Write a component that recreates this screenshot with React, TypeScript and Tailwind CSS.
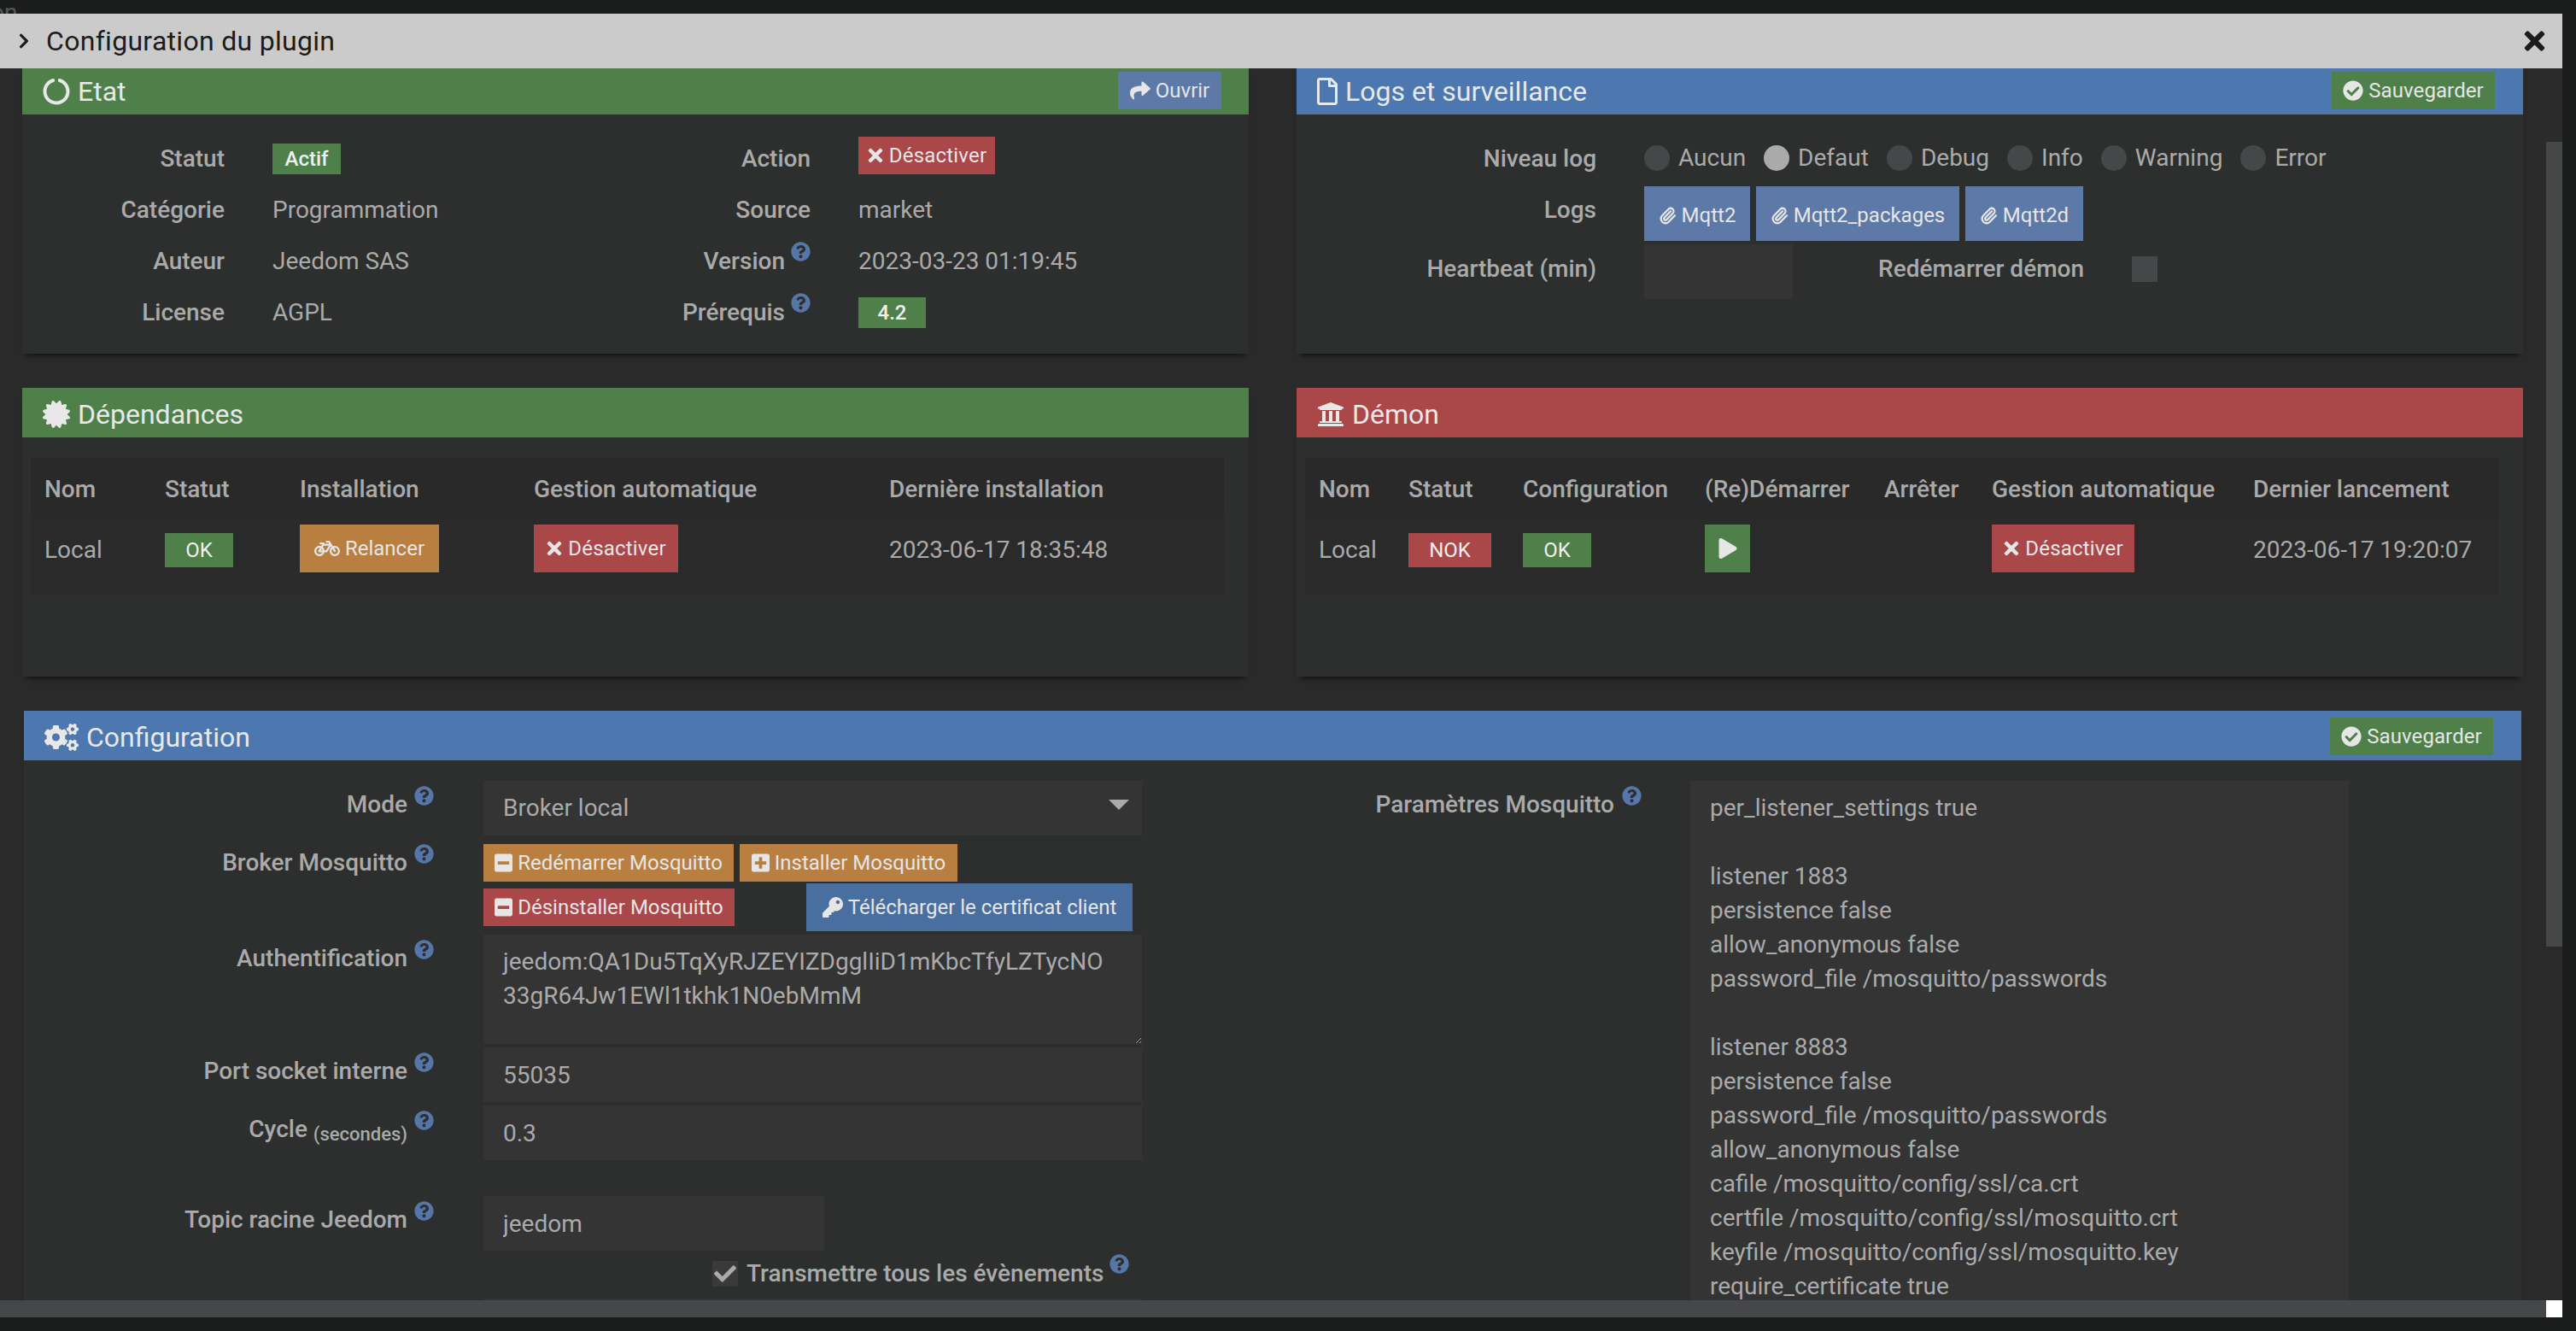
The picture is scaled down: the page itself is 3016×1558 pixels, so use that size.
import type { ReactNode } from 'react';
import { Paperclip } from 'lucide-react';
import {
  FaBicycle,
  FaCertificate,
  FaCheck,
  FaCheckCircle,
  FaChevronRight,
  FaCircleNotch,
  FaCogs,
  FaKey,
  FaMinusSquare,
  FaPlay,
  FaPlusSquare,
  FaQuestionCircle,
  FaRegFile,
  FaShare,
  FaTimes,
  FaUniversity,
} from 'react-icons/fa';

function Help({ className = 'mt-[7px]' }: { className?: string }) {
  return <FaQuestionCircle className={`w-[23px] h-[23px] shrink-0 text-[#5676a8] ${className}`} />;
}

function Btn({
  color,
  className = 'h-[44px] px-3',
  children,
}: {
  color: string;
  className?: string;
  children: ReactNode;
}) {
  return (
    <button className={`flex items-center justify-center gap-[6px] shrink-0 text-[24px] text-[#e6e6e6] whitespace-nowrap ${color} ${className}`}>
      {children}
    </button>
  );
}

function Badge({ color, className = 'w-[80px] h-[36px]', children }: { color: string; className?: string; children: ReactNode }) {
  return (
    <span className={`flex items-center justify-center text-[24px] text-[#f0f0f0] ${color} ${className}`}>
      {children}
    </span>
  );
}

function SaveBtn() {
  return (
    <Btn color="bg-[#4f8049]" className="h-[44px] w-[191px] mt-2">
      <FaCheckCircle className="w-[24px] h-[24px]" />
      <span className="tracking-[0.1px]">Sauvegarder</span>
    </Btn>
  );
}

function Panel({
  title,
  icon,
  color,
  action,
  className = '',
  children,
}: {
  title: string;
  icon: ReactNode;
  color: string;
  action?: ReactNode;
  className?: string;
  children: ReactNode;
}) {
  return (
    <section className={`bg-[#2d2f2e] shadow-[0_6px_6px_-4px_rgba(0,0,0,0.6)] ${className}`}>
      <header className={`flex justify-between h-[58px] pl-6 pr-[33px] ${color}`}>
        <h3 className="flex items-center gap-[9px] text-[32px] text-[#e8e8e8] pt-[3px]">
          {icon}
          {title}
        </h3>
        {action}
      </header>
      {children}
    </section>
  );
}

function Info({ label, help, children }: { label: string; help?: boolean; children: ReactNode }) {
  return (
    <div className="flex h-[60px] gap-[56px]">
      <div className="flex justify-end gap-[7px] w-[237px] font-medium leading-[60px]">
        {label}
        {help && <Help />}
      </div>
      <div className="flex items-center">{children}</div>
    </div>
  );
}

const levels = ['Aucun', 'Defaut', 'Debug', 'Info', 'Warning', 'Error'];

function Radio({ label, checked }: { label: string; checked?: boolean }) {
  return (
    <span className="flex items-center gap-[10px] leading-[30px]">
      <span className={`w-[30px] h-[30px] rounded-full ${checked ? 'bg-[#aaaaaa]' : 'bg-[#464748]'}`} />
      {label}
    </span>
  );
}

function LogBtn({ width, children }: { width: string; children: ReactNode }) {
  return (
    <Btn color="bg-[#5c79a8]" className={`h-[64px] pt-1 gap-[5px] ${width}`}>
      <Paperclip size={21} strokeWidth={2.6} />
      {children}
    </Btn>
  );
}

const depCols = 'grid-cols-[141px_158px_274px_416px_1fr]';
const daemonCols = 'grid-cols-[105px_134px_213px_210px_126px_306px_1fr]';

function HeadRow({ cols, names }: { cols: string; names: string[] }) {
  return (
    <div className={`grid ${cols} pl-4 h-[72px] leading-[74px] font-medium border-b border-[#2b2b2b]`}>
      {names.map((name) => (
        <span key={name} className="whitespace-nowrap">{name}</span>
      ))}
    </div>
  );
}

function Desactiver({ className }: { className: string }) {
  return (
    <Btn color="bg-[#a94749]" className={`gap-[4px] ${className}`}>
      <FaTimes className="w-[20px] h-[24px]" />
      <span className="tracking-[0.2px]">Désactiver</span>
    </Btn>
  );
}

function ConfigRow({ label, children, className = '' }: { label: ReactNode; children: ReactNode; className?: string }) {
  return (
    <div className={`flex gap-[58px] ${className}`}>
      <div className="flex justify-end gap-2 w-[480px] shrink-0 font-medium leading-[56px] whitespace-nowrap">
        <span>{label}</span>
        <Help className="mt-[6px]" />
      </div>
      {children}
    </div>
  );
}

const fieldClass = 'h-[64px] pl-[23px] bg-[#343434] text-[#aaaaaa] outline-none';

const mosquitto = `per_listener_settings true

listener 1883
persistence false
allow_anonymous false
password_file /mosquitto/passwords

listener 8883
persistence false
password_file /mosquitto/passwords
allow_anonymous false
cafile /mosquitto/config/ssl/ca.crt
certfile /mosquitto/config/ssl/mosquitto.crt
keyfile /mosquitto/config/ssl/mosquitto.key
require_certificate true`;

export default function App() {
  return (
    <div className="w-[3016px] h-[1558px] overflow-hidden bg-[#1b1d1c] font-[Roboto,sans-serif] text-[28px] text-[#aaaaaa]">
      <div className="h-4 overflow-hidden">
        <span className="block mt-px -ml-[11px] leading-[28px] text-[#555555]">on</span>
      </div>
      <div className="flex flex-col w-[3000px] h-[1526px]">
        <div className="flex items-center justify-between shrink-0 h-16 pl-[21px] pr-5 bg-[#cbcbcb] text-[32px] text-[#1c1c1c]">
          <span className="flex items-center gap-[19px] tracking-[0.3px]">
            <FaChevronRight className="w-[14px] h-[20px]" />
            Configuration du plugin
          </span>
          <FaTimes className="w-[25px] h-[34px]" />
        </div>

        <div className="flex h-[1442px]">
          <main className="w-[2981px] overflow-hidden bg-[#2a2a2a] pl-[26px] pr-[27px]">
            <div className="-mt-1 grid grid-cols-[1436px_1436px] gap-x-[56px] gap-y-10">
              <Panel
                title="Etat"
                color="bg-[#4f8049]"
                icon={<FaCircleNotch className="w-[32px] h-[32px]" />}
                className="h-[338px]"
                action={
                  <Btn color="bg-[#5c79a8]" className="h-[44px] w-[121px] mt-2 mr-[-1px]">
                    <FaShare className="w-[24px] h-[24px]" />
                    Ouvrir
                  </Btn>
                }
              >
                <div className="grid grid-cols-[686px_1fr] pt-[22px]">
                  <Info label="Statut"><Badge color="bg-[#4f8049]" className="w-[80px] h-[36px] font-medium">Actif</Badge></Info>
                  <Info label="Action">
                    <Desactiver className="h-[44px] w-[160px] -mt-2" />
                  </Info>
                  <Info label="Catégorie">Programmation</Info>
                  <Info label="Source">market</Info>
                  <Info label="Auteur">Jeedom SAS</Info>
                  <Info label="Version" help>2023-03-23 01:19:45</Info>
                  <Info label="License">AGPL</Info>
                  <Info label="Prérequis" help><Badge color="bg-[#4f8049]" className="w-[79px] h-[36px] font-medium">4.2</Badge></Info>
                </div>
              </Panel>

              <Panel
                title="Logs et surveillance"
                color="bg-[#4c77af]"
                icon={<FaRegFile className="w-[24px] h-[32px]" />}
                className="h-[338px]"
                action={<SaveBtn />}
              >
                <div className="pt-[22px]">
                  <div className="flex items-center h-[60px] gap-[56px]">
                    <span className="w-[351px] text-right font-medium">Niveau log</span>
                    <div className="flex gap-[21px] -mt-[2px]">
                      {levels.map((level) => (
                        <Radio key={level} label={level} checked={level === 'Defaut'} />
                      ))}
                    </div>
                  </div>
                  <div className="flex gap-[56px] mt-[2px] h-[64px]">
                    <span className="w-[351px] text-right font-medium leading-[56px]">Logs</span>
                    <div className="flex gap-[7px]">
                      <LogBtn width="w-[124px]">Mqtt2</LogBtn>
                      <LogBtn width="w-[238px]">Mqtt2_packages</LogBtn>
                      <LogBtn width="w-[138px]">Mqtt2d</LogBtn>
                    </div>
                  </div>
                  <div className="flex items-center gap-[56px] mt-1 h-[64px]">
                    <span className="w-[351px] text-right font-medium mb-[6px]">Heartbeat (min)</span>
                    <div className="w-[174px] h-[64px] bg-[#343434]" />
                    <span className="w-[285px] text-right font-medium whitespace-nowrap mb-[6px]">Redémarrer démon</span>
                    <span className="w-[30px] h-[30px] bg-[#464748] mb-[6px]" />
                  </div>
                </div>
              </Panel>

              <Panel title="Dépendances" color="bg-[#4f8049]" icon={<FaCertificate className="w-[32px] h-[32px]" />} className="h-[338px]">
                <div className="mt-6 ml-[10px] w-[1397px] bg-[#292929]">
                  <HeadRow cols={depCols} names={['Nom', 'Statut', 'Installation', 'Gestion automatique', 'Dernière installation']} />
                  <div className={`grid ${depCols} pl-4 h-[88px] bg-[#2a2a2a] items-start leading-[72px]`}>
                    <span>Local</span>
                    <Badge color="bg-[#4f8049]" className="w-[80px] h-[40px] mt-4">OK</Badge>
                    <Btn color="bg-[#b87f40]" className="w-[163px] h-[56px] mt-[6px]">
                      <FaBicycle className="w-[30px] h-[24px]" />
                      Relancer
                    </Btn>
                    <Desactiver className="w-[169px] h-[56px] mt-[6px]" />
                    <span>2023-06-17 18:35:48</span>
                  </div>
                </div>
              </Panel>

              <Panel title="Démon" color="bg-[#a94749]" icon={<FaUniversity className="w-[32px] h-[32px]" />} className="h-[338px]">
                <div className="mt-6 ml-[10px] w-[1397px] bg-[#292929]">
                  <HeadRow cols={daemonCols} names={['Nom', 'Statut', 'Configuration', '(Re)Démarrer', 'Arrêter', 'Gestion automatique', 'Dernier lancement']} />
                  <div className={`grid ${daemonCols} pl-4 h-[88px] bg-[#2a2a2a] items-start leading-[72px]`}>
                    <span>Local</span>
                    <Badge color="bg-[#a94749]" className="w-[97px] h-[40px] mt-4">NOK</Badge>
                    <Badge color="bg-[#4f8049]" className="w-[80px] h-[40px] mt-4">OK</Badge>
                    <Btn color="bg-[#4f8049]" className="w-[53px] h-[56px] mt-[6px]">
                      <FaPlay className="w-[22px] h-[24px]" />
                    </Btn>
                    <span />
                    <Desactiver className="w-[167px] h-[56px] mt-[6px]" />
                    <span className="whitespace-nowrap">2023-06-17 19:20:07</span>
                  </div>
                </div>
              </Panel>

              <Panel
                title="Configuration"
                color="bg-[#4c77af]"
                icon={<FaCogs className="w-[40px] h-[32px]" />}
                className="col-span-2 mx-[2px]"
                action={<SaveBtn />}
              >
                <div className="grid grid-cols-[1462px_1fr] pt-6 h-[900px]">
                  <div className="flex flex-col gap-1">
                    <ConfigRow label="Mode">
                      <div className={`flex items-center justify-between w-[771px] ${fieldClass}`}>
                        Broker local
                        <svg viewBox="0 0 24 12" className="w-[24px] h-[12px] mr-[15px] -mt-[8px]">
                          <polygon points="0,0 24,0 12,12" fill="#aaaaaa" />
                        </svg>
                      </div>
                    </ConfigRow>
                    <ConfigRow label="Broker Mosquitto">
                      <div className="flex flex-col gap-[2px] pt-[6px] w-[771px]">
                        <div className="flex gap-[7px]">
                          <Btn color="bg-[#b87f40]" className="w-[293px] h-[44px]">
                            <FaMinusSquare className="w-[21px] h-[24px]" />
                            Redémarrer Mosquitto
                          </Btn>
                          <Btn color="bg-[#b87f40]" className="w-[255px] h-[44px]">
                            <FaPlusSquare className="w-[21px] h-[24px]" />
                            Installer Mosquitto
                          </Btn>
                        </div>
                        <div className="flex items-center gap-[84px] h-[56px]">
                          <Btn color="bg-[#a94749]" className="w-[294px] h-[44px]">
                            <FaMinusSquare className="w-[21px] h-[24px]" />
                            Désinstaller Mosquitto
                          </Btn>
                          <Btn color="bg-[#486f9f]" className="w-[382px] h-[56px]">
                            <FaKey className="w-[24px] h-[24px]" />
                            Télécharger le certificat client
                          </Btn>
                        </div>
                      </div>
                    </ConfigRow>
                    <ConfigRow label="Authentification">
                      <textarea
                        readOnly
                        className="block w-[771px] h-[128px] pt-3 pl-[23px] pr-10 leading-10 bg-[#343434] text-[#aaaaaa] outline-none"
                        defaultValue="jeedom:QA1Du5TqXyRJZEYIZDgglIiD1mKbcTfyLZTycNO33gR64Jw1EWl1tkhk1N0ebMmM"
                      />
                    </ConfigRow>
                    <ConfigRow label="Port socket interne">
                      <input readOnly defaultValue="55035" className={`w-[771px] ${fieldClass}`} />
                    </ConfigRow>
                    <ConfigRow label={<>Cycle <small className="text-[22px] align-[-4px]">(secondes)</small></>}>
                      <input readOnly defaultValue="0.3" className={`w-[771px] ${fieldClass}`} />
                    </ConfigRow>
                    <ConfigRow label="Topic racine Jeedom" className="mt-[38px]">
                      <input readOnly defaultValue="jeedom" className={`w-[399px] ${fieldClass}`} />
                    </ConfigRow>
                    <div className="flex h-[48px] pl-[806px] items-start">
                      <span className="flex items-center justify-center w-[30px] h-[30px] mt-2 bg-[#3a3a3a]">
                        <FaCheck className="w-[30px] h-[26px] text-[#aaaaaa]" />
                      </span>
                      <span className="ml-[10px] mt-[6px] font-medium leading-[34px] whitespace-nowrap">Transmettre tous les évènements</span>
                      <Help className="ml-[7px]" />
                    </div>
                    <div className="ml-[538px] w-[771px] h-[64px] bg-[#343434]" />
                  </div>
                  <div className="flex gap-[57px]">
                    <div className="flex justify-end gap-[9px] w-[432px] shrink-0 font-medium leading-[56px]">
                      Paramètres Mosquitto
                      <Help className="mt-[6px]" />
                    </div>
                    <textarea
                      readOnly
                      className="block w-[771px] h-[860px] pt-3 pl-[23px] leading-10 bg-[#343434] text-[#aaaaaa] outline-none"
                      defaultValue={mosquitto}
                    />
                  </div>
                </div>
              </Panel>
            </div>
          </main>
          <div className="w-[19px] pt-[86px] bg-[#2a2a2a]">
            <div className="h-[942px] bg-[#464748]" />
          </div>
        </div>

        <div className="flex h-5">
          <div className="flex-1 bg-[#464748]" />
          <div className="w-[19px] bg-white" />
        </div>
      </div>
    </div>
  );
}
